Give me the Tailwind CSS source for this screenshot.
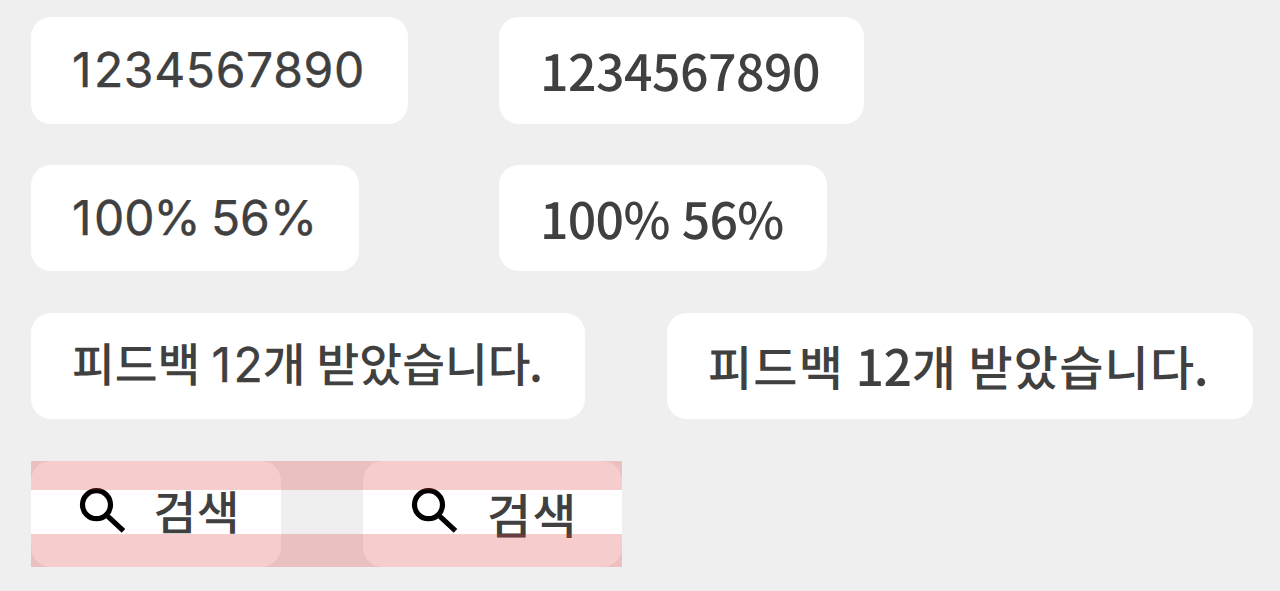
<!DOCTYPE html>
<html lang="ko">
<head>
    <meta charset="UTF-8">
    <meta name="viewport" content="width=device-width, initial-scale=1.0">
    <title>Font Comparison</title>
    <script src="https://cdn.jsdelivr.net/npm/@tailwindcss/browser@4"></script>
</head>
<body class="bg-[#efefef] h-[591px] overflow-hidden text-[#404040] whitespace-nowrap font-medium [text-rendering:geometricPrecision]">
    <div class="pl-[31px] pt-[17.2px] flex flex-col gap-[41.3px]">
        <!-- Digits -->
        <div class="flex gap-[91px]">
            <div class="w-[377px] h-[106.5px] rounded-[20px] bg-white pl-[41px] pt-[16.8px] font-['Inter','Noto_Sans_CJK_KR',sans-serif] font-normal [-webkit-text-stroke:0.4px_#404040] text-[48px] leading-[72px] tracking-[0.65px]"><span class="tracking-[2.4px]">1</span>234567890</div>
            <div class="w-[364.5px] h-[106.5px] rounded-[20px] bg-white pl-[41px] pt-[17px] font-['Noto_Sans_CJK_KR',sans-serif] text-[50px] leading-[72px] tracking-[-0.5px]">1234567890</div>
        </div>

        <!-- Percent -->
        <div class="flex gap-[140px]">
            <div class="w-[328px] h-[106.5px] rounded-[20px] bg-white pl-[41px] pt-[16.8px] font-['Inter','Noto_Sans_CJK_KR',sans-serif] font-normal [-webkit-text-stroke:0.4px_#404040] text-[48px] leading-[72px] [word-spacing:-3.2px]"><span class="tracking-[2.4px]">1</span>0<span class="tracking-[-1px]">0</span>% 56%</div>
            <div class="w-[328px] h-[106.5px] rounded-[20px] bg-white pl-[41px] pt-[17px] font-['Noto_Sans_CJK_KR',sans-serif] text-[50px] leading-[72px] tracking-[-0.7px] [word-spacing:-1.2px]">100% 56%</div>
        </div>

        <!-- Sentence -->
        <div class="flex gap-[82px]">
            <div class="w-[554px] h-[106.5px] rounded-[20px] bg-white pl-[41px] pt-[14px] font-['Noto_Sans_CJK_KR',sans-serif] text-[46.5px] leading-[72px] [word-spacing:-2px]">피드백 <span class="font-['Inter'] font-normal [-webkit-text-stroke:0.4px_#404040] text-[48px]"><span class="tracking-[2.6px]">1</span>2</span>개 받았습니다<span class="-ml-[1.5px]">.</span></div>
            <div class="w-[586px] h-[106.5px] rounded-[20px] bg-white pl-[41px] pt-4 font-['Noto_Sans_CJK_KR',sans-serif] text-[48px] leading-[72px] tracking-[1.2px] [word-spacing:-3.2px]">피드백 <span class="text-[50px] tracking-[-0.45px]">12</span>개 받았습니다<span class="text-[50px] -ml-[1.5px]">.</span></div>
        </div>

        <!-- Search buttons with padding guides -->
        <div class="relative w-[591px] h-[106.9px] flex gap-[82px] font-['Noto_Sans_CJK_KR',sans-serif] leading-[72px]">
            <div class="w-[250px] rounded-[20px] bg-white pl-[41px] flex">
                <svg class="w-[60px] h-[60px] mt-[19.4px] shrink-0" viewBox="0 0 60 60" fill="none" stroke="#000">
                    <circle cx="24.5" cy="24.7" r="14" stroke-width="5.2"/>
                    <path d="M35.9 36.3L51.5 50.8" stroke-width="5.2"/>
                </svg>
                <span class="ml-[21.5px] pt-[14px] text-[46.5px] tracking-[0.5px]">검색</span>
            </div>
            <div class="w-[259px] rounded-[20px] bg-white pl-[41px] flex">
                <svg class="w-[60px] h-[60px] mt-[19.4px] shrink-0" viewBox="0 0 60 60" fill="none" stroke="#000">
                    <circle cx="24.5" cy="24.7" r="14" stroke-width="5.2"/>
                    <path d="M35.9 36.3L51.5 50.8" stroke-width="5.2"/>
                </svg>
                <span class="ml-[23px] pt-[16.4px] text-[48px] tracking-[1.2px]">검색</span>
            </div>
            <div class="absolute inset-x-0 top-0 h-[29px] bg-[#db3333]/25"></div>
            <div class="absolute inset-x-0 bottom-0 h-[33px] bg-[#db3333]/25"></div>
        </div>
    </div>
</body>
</html>
